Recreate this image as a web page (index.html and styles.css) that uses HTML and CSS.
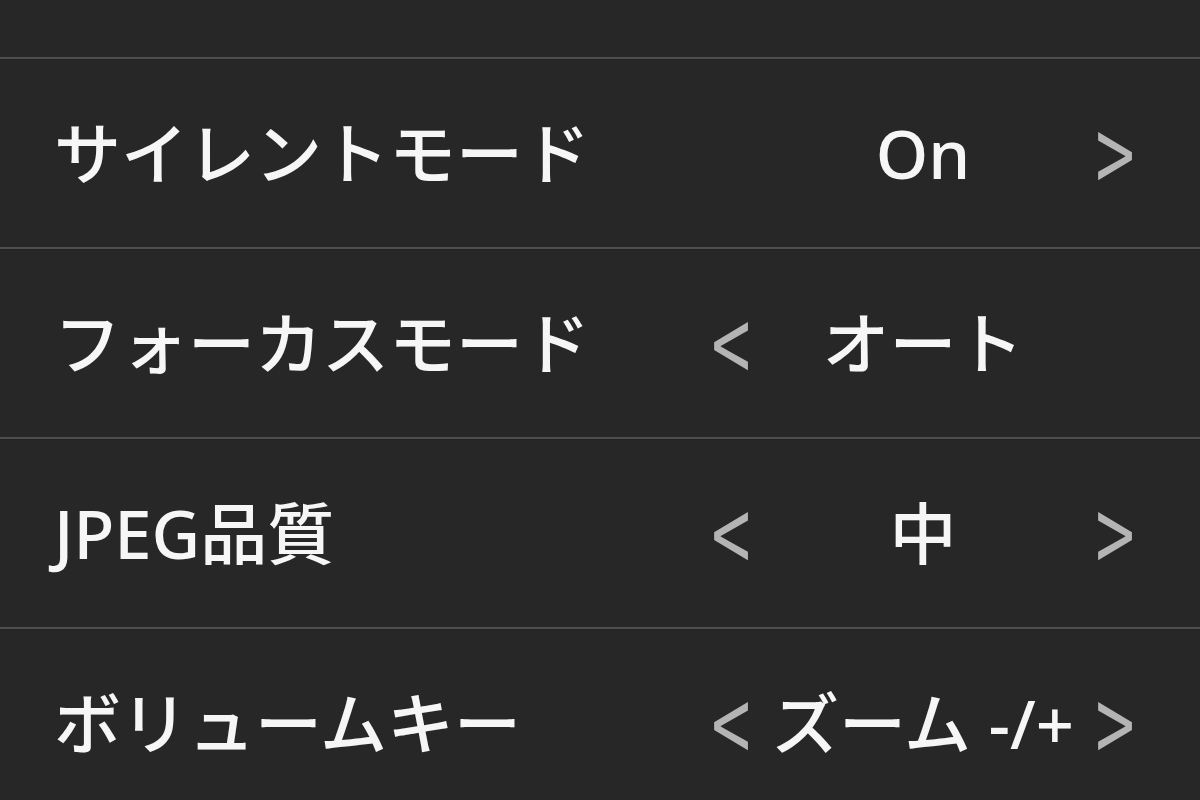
FILE: index.html
```html
<!DOCTYPE html>
<html lang="ja">
<head>
<meta charset="utf-8">
<link rel="stylesheet" href="styles.css">
</head>
<body>
<div class="list">
  <div class="row row-top"></div>
  <div class="row">
    <div class="label">サイレントモード</div>
    <div class="control">
      <span class="arrow off">&lt;</span>
      <span class="value">On</span>
      <span class="arrow">&gt;</span>
    </div>
  </div>
  <div class="row">
    <div class="label">フォーカスモード</div>
    <div class="control">
      <span class="arrow">&lt;</span>
      <span class="value">オート</span>
      <span class="arrow off">&gt;</span>
    </div>
  </div>
  <div class="row">
    <div class="label">JPEG品質</div>
    <div class="control">
      <span class="arrow">&lt;</span>
      <span class="value">中</span>
      <span class="arrow">&gt;</span>
    </div>
  </div>
  <div class="row">
    <div class="label">ボリュームキー</div>
    <div class="control">
      <span class="arrow">&lt;</span>
      <span class="value">ズーム -/+</span>
      <span class="arrow">&gt;</span>
    </div>
  </div>
</div>
</body>
</html>
```
FILE: styles.css
```css
html, body {
  margin: 0;
  padding: 0;
  background: #272727;
  overflow: hidden;
}
body {
  width: 1200px;
  height: 800px;
  font-family: "Noto Sans", "Noto Sans CJK JP", sans-serif;
  color: #f6f6f6;
}
.list {
  display: flex;
  flex-direction: column;
}
.row {
  height: 188px;
  display: flex;
  align-items: center;
  border-bottom: 2px solid #4e4e4e;
  box-shadow: 0 1px 0 #222;
}
.row-top {
  height: 57px;
}
.label {
  padding-left: 54px;
  width: 650px;
  font-size: 67px;
  font-weight: 500;
  line-height: 1;
  white-space: nowrap;
}
.control {
  margin-left: 2px;
  width: 434px;
  display: flex;
  align-items: center;
  font-size: 67px;
  font-weight: 500;
  line-height: 1;
}
.arrow {
  display: inline-block;
  width: 50px;
  color: #b4b4b4;
  text-align: center;
  font-family: "Noto Sans CJK JP", sans-serif;
  font-weight: 400;
  font-size: 74px;
  line-height: 1;
  margin-top: -6px;
  transform: scale(0.95, 1.45);
}
.arrow.off {
  visibility: hidden;
}
.value {
  flex: 1;
  text-align: center;
  white-space: nowrap;
}
```
